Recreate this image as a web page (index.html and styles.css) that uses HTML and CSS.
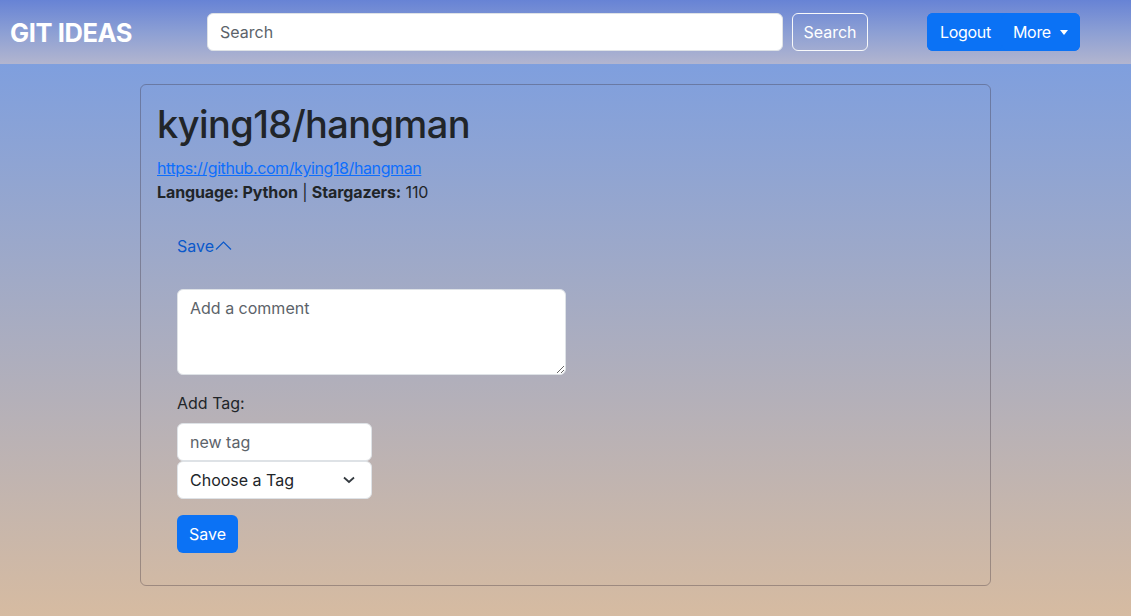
FILE: index.html
```html
<!DOCTYPE html>
<html lang="en">
<head>
<meta charset="utf-8">
<title>Git Ideas</title>
<link rel="stylesheet" href="styles.css">
</head>
<body>
<nav class="navbar">
  <a class="brand" href="#">GIT IDEAS</a>
  <form class="search-form">
    <input class="search-input" type="text" placeholder="Search">
    <button class="btn-outline" type="button">Search</button>
  </form>
  <div class="btn-group">
    <button class="btn-primary nav-btn" type="button">Logout</button>
    <button class="btn-primary nav-btn more" type="button">More <span class="caret"></span></button>
  </div>
</nav>
<main class="main">
  <div class="card">
    <h1 class="title">kying18/hangman</h1>
    <a class="repo-link" href="#">https://github.com/kying18/hangman</a>
    <p class="meta"><b>Language: Python</b> | <b>Stargazers:</b> 110</p>
    <div class="save-section">
      <a class="save-toggle" href="#">Save<svg class="chev" width="17" height="12" viewBox="0 0 17 12"><path d="M1 10.5 L8.5 3 L16 10.5" fill="none" stroke="currentColor" stroke-width="1.2"/></svg></a>
      <textarea class="comment" placeholder="Add a comment"></textarea>
      <label class="tag-label">Add Tag:</label>
      <input class="tag-input" type="text" placeholder="new tag">
      <div class="select">
        <span>Choose a Tag</span>
        <svg width="12" height="8" viewBox="0 0 12 8"><path d="M1 1.5 L6 6 L11 1.5" fill="none" stroke="#343a40" stroke-width="1.8"/></svg>
      </div>
      <button class="btn-primary save-btn" type="button">Save</button>
    </div>
  </div>
</main>
</body>
</html>
```

FILE: styles.css
```css
* { box-sizing: border-box; }
html, body { margin: 0; padding: 0; }
body {
  font-family: Inter, "Noto Sans", sans-serif;
  font-size: 16px;
  color: #212529;
  min-height: 616px;
  background: linear-gradient(180deg, #7f9fde 64px, #d6bba1 616px);
}
.navbar {
  height: 64px;
  display: flex;
  align-items: center;
  padding: 0 10px;
  background: linear-gradient(180deg, #6783d5 0%, #8c9fd4 50%, #b2b5cf 100%);
}
.brand {
  color: #fff;
  font-weight: 700;
  font-size: 25.5px;
  text-decoration: none;
  letter-spacing: -0.4px;
  width: 197px;
}
.search-form {
  display: flex;
  gap: 9px;
}
.search-input {
  width: 576px;
  height: 38px;
  border: 1px solid #dee2e6;
  border-radius: 6px;
  padding: 6px 12px;
  font: inherit;
  font-size: 16px;
  color: #212529;
  background: #fff;
}
.search-input::placeholder { color: #5c636a; }
.btn-outline {
  height: 38px;
  width: 76px;
  background: transparent;
  border: 1px solid #f8f9fa;
  border-radius: 6px;
  color: #fff;
  font: inherit;
  font-size: 16px;
}
.btn-group {
  margin-left: 59px;
  display: flex;
  background: #0b72f5;
  border-radius: 6px;
  height: 38px;
}
.btn-primary {
  background: #0b72f5;
  color: #fff;
  border: 0;
  border-radius: 6px;
  font: inherit;
  font-size: 16px;
}
.nav-btn {
  padding: 0 11px;
  height: 38px;
  letter-spacing: -0.3px;
}
.nav-btn:first-child { padding-left: 13px; }
.more { padding-right: 12px; }
.caret {
  display: inline-block;
  margin-left: 5px;
  vertical-align: 3px;
  border-top: 5px solid #fff;
  border-left: 4px solid transparent;
  border-right: 4px solid transparent;
}
.main {
  padding: 20px 140px 30px;
}
.card {
  border: 1px solid rgba(60, 50, 60, 0.35);
  border-radius: 6px;
  padding: 16px 16px 32px;
  min-height: 502px;
}
.title {
  margin: 0 0 8px;
  font-size: 38px;
  font-weight: 500;
  line-height: 47px;
  letter-spacing: -0.6px;
}
.repo-link {
  display: block;
  color: #0d6efd;
  text-decoration: underline;
  line-height: 24px;
  letter-spacing: -0.4px;
}
.meta {
  margin: 0;
  line-height: 24px;
  letter-spacing: -0.1px;
}
.save-section {
  padding: 30px 20px 0;
  display: flex;
  flex-direction: column;
  align-items: flex-start;
}
.save-toggle {
  color: #0a58ca;
  text-decoration: none;
  display: flex;
  align-items: center;
  line-height: 24px;
}
.chev { margin-left: 1px; margin-top: -2px; }
.comment {
  margin-top: 31px;
  width: 389px;
  height: 86px;
  border: 1px solid #dee2e6;
  border-radius: 6px;
  padding: 6px 12px;
  font: inherit;
  font-size: 16px;
  line-height: 24px;
  resize: vertical;
}
.comment::placeholder { color: #5c636a; }
.tag-label {
  margin-top: 16px;
  line-height: 24px;
}
.tag-input {
  margin-top: 8px;
  width: 195px;
  height: 38px;
  border: 1px solid #dee2e6;
  border-radius: 6px;
  padding: 6px 12px;
  font: inherit;
  font-size: 16px;
}
.tag-input::placeholder { color: #5c636a; }
.select {
  width: 195px;
  height: 38px;
  background: #fff;
  border: 1px solid #dee2e6;
  border-radius: 6px;
  padding: 0 16px 0 12px;
  display: flex;
  align-items: center;
  justify-content: space-between;
}
.save-btn {
  margin-top: 16px;
  height: 38px;
  padding: 0 12px;
}
```
